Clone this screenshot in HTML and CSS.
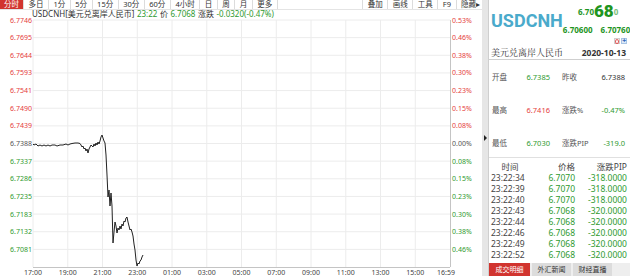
FILE: index.html
```html
<!DOCTYPE html>
<html lang="zh-CN">
<head>
  <meta charset="UTF-8">
  <title>USDCNH 分时</title>
  <link rel="stylesheet" href="styles.css">
</head>
<body>
<div class="app">

  <!-- 左侧：分时图 -->
  <div class="main">
    <div class="toolbar">
      <ul class="tabs">
        <li class="on">分时</li><li>多日</li><li>1分</li><li>5分</li><li>15分</li><li>30分</li><li>60分</li><li>4小时</li><li>日</li><li>周</li><li>月</li><li>更多</li>
      </ul>
      <ul class="tools">
        <li>叠加</li><li>画线</li><li>工具</li><li>F9</li><li>隐藏▸</li>
      </ul>
    </div>
    <div class="quote">
      <span>USDCNH[美元兑离岸人民币]</span><span class="dn">23:22</span><span>价</span><span class="dn">6.7068</span><span>涨跌</span><span class="dn">-0.0320(-0.47%)</span>
    </div>
    <svg class="chart" width="482" height="258" viewBox="0 18 482 258">
      <g class="grid">
        <line x1="33" y1="20" x2="450" y2="20"/>
        <line x1="33" y1="37.64" x2="450" y2="37.64"/>
        <line x1="33" y1="55.29" x2="450" y2="55.29"/>
        <line x1="33" y1="72.93" x2="450" y2="72.93"/>
        <line x1="33" y1="90.57" x2="450" y2="90.57"/>
        <line x1="33" y1="108.21" x2="450" y2="108.21"/>
        <line x1="33" y1="125.86" x2="450" y2="125.86"/>
        <line x1="33" y1="143.5" x2="450" y2="143.5"/>
        <line x1="33" y1="161.14" x2="450" y2="161.14"/>
        <line x1="33" y1="178.79" x2="450" y2="178.79"/>
        <line x1="33" y1="196.43" x2="450" y2="196.43"/>
        <line x1="33" y1="214.07" x2="450" y2="214.07"/>
        <line x1="33" y1="231.71" x2="450" y2="231.71"/>
        <line x1="33" y1="249.36" x2="450" y2="249.36"/>
        <line x1="33" y1="20" x2="33" y2="267"/>
        <line x1="67.75" y1="20" x2="67.75" y2="267"/>
        <line x1="102.5" y1="20" x2="102.5" y2="267"/>
        <line x1="137.25" y1="20" x2="137.25" y2="267"/>
        <line x1="172" y1="20" x2="172" y2="267"/>
        <line x1="206.75" y1="20" x2="206.75" y2="267"/>
        <line x1="241.5" y1="20" x2="241.5" y2="267"/>
        <line x1="276.25" y1="20" x2="276.25" y2="267"/>
        <line x1="311" y1="20" x2="311" y2="267"/>
        <line x1="345.75" y1="20" x2="345.75" y2="267"/>
        <line x1="380.5" y1="20" x2="380.5" y2="267"/>
        <line x1="415.25" y1="20" x2="415.25" y2="267"/>
      </g>
      <line class="axis" x1="450.5" y1="20" x2="450.5" y2="267"/>
      <line class="axis" x1="33" y1="267.5" x2="450" y2="267.5"/>

      <g class="ylab">
        <text x="32" y="22.5" class="up">6.7746</text>
        <text x="32" y="40.1" class="up">6.7695</text>
        <text x="32" y="57.8" class="up">6.7644</text>
        <text x="32" y="75.4" class="up">6.7593</text>
        <text x="32" y="93.1" class="up">6.7541</text>
        <text x="32" y="110.7" class="up">6.7490</text>
        <text x="32" y="128.4" class="up">6.7439</text>
        <text x="32" y="146">6.7388</text>
        <text x="32" y="163.6" class="dn">6.7337</text>
        <text x="32" y="181.3" class="dn">6.7286</text>
        <text x="32" y="198.9" class="dn">6.7235</text>
        <text x="32" y="216.6" class="dn">6.7183</text>
        <text x="32" y="234.2" class="dn">6.7132</text>
        <text x="32" y="251.9" class="dn">6.7081</text>
      </g>
      <g class="plab">
        <text x="452" y="22.5" class="up">0.53%</text>
        <text x="452" y="40.1" class="up">0.46%</text>
        <text x="452" y="57.8" class="up">0.38%</text>
        <text x="452" y="75.4" class="up">0.30%</text>
        <text x="452" y="93.1" class="up">0.23%</text>
        <text x="452" y="110.7" class="up">0.15%</text>
        <text x="452" y="128.4" class="up">0.08%</text>
        <text x="452" y="146">0.00%</text>
        <text x="452" y="163.6" class="dn">0.08%</text>
        <text x="452" y="181.3" class="dn">0.15%</text>
        <text x="452" y="198.9" class="dn">0.23%</text>
        <text x="452" y="216.6" class="dn">0.30%</text>
        <text x="452" y="234.2" class="dn">0.38%</text>
        <text x="452" y="251.9" class="dn">0.46%</text>
      </g>
      <g class="xlab">
        <text x="33" y="275">17:00</text>
        <text x="67.75" y="275">19:00</text>
        <text x="102.5" y="275">21:00</text>
        <text x="137.25" y="275">23:00</text>
        <text x="172" y="275">01:00</text>
        <text x="206.75" y="275">03:00</text>
        <text x="241.5" y="275">05:00</text>
        <text x="276.25" y="275">07:00</text>
        <text x="311" y="275">09:00</text>
        <text x="345.75" y="275">11:00</text>
        <text x="380.5" y="275">13:00</text>
        <text x="415.25" y="275">15:00</text>
        <text x="446" y="275">16:59</text>
      </g>

      <!-- 价格走势 -->
      <polyline class="price" points="33,144 34,145 36,144 38,146 40,145 42,146 44,145 46,146 48,145 50,146 52,145 55,145 57,146 60,145 63,145 66,144 68,145 70,144 72,143.5 75,143 78,143 80,143.5 81,145 82,147 83,146 84,149 85,148 86,151 87,149 88,153 89,149 90,147 91,145 92,146 93,147 94,144 95,146 96,143 97,145 98,142 99,144 100,141 101,137 102,135 103,138 104,141 105,143 106,155 107,175 108,197 109,190 110,206 111,193 112,206 113,243 114,232 115,222 116,226 117,233 118,228 119,230 120,226 121,229 122,224 123,226 124,221 125,222 126,218 127,217 128,222 129,226 130,230 131,229 132,232 133,236 134,244 135,250 136,260 137,266 138,263 139,264 140,261 141,260 142,257 143,255"/>
    </svg>
  </div>

  <div class="splitter"><span class="arrow"></span></div>

  <!-- 右侧：报价信息 -->
  <div class="side">
    <div class="ticker">
      <div class="head">
        <span class="sym">USDCNH</span>
        <div class="prices">
          <span class="last">6.70<b>68</b><i>0</i></span>
          <span class="bidask"><span>6.70600</span><span>6.70760</span></span>
          <span class="btns"><span class="btn-alert"></span><span class="btn-add">+</span></span>
        </div>
      </div>
      <div class="name">
        <span>美元兑离岸人民币</span>
        <span class="date">2020-10-13</span>
      </div>
    </div>

    <div class="stats">
      <div class="cell"><span>开盘</span><span class="dn">6.7385</span></div>
      <div class="cell"><span>昨收</span><span class="flat">6.7388</span></div>
      <div class="cell"><span>最高</span><span class="up">6.7416</span></div>
      <div class="cell"><span>涨跌%</span><span class="dn">-0.47%</span></div>
      <div class="cell"><span>最低</span><span class="dn">6.7030</span></div>
      <div class="cell"><span>涨跌PIP</span><span class="dn">-319.0</span></div>
    </div>

    <div class="ticks">
      <div class="th">时间</div><div class="th r">价格</div><div class="th r">涨跌PIP</div>
      <div>23:22:34</div><div class="r dn">6.7070</div><div class="r dn">-318.0000</div>
      <div>23:22:39</div><div class="r dn">6.7070</div><div class="r dn">-318.0000</div>
      <div>23:22:40</div><div class="r dn">6.7070</div><div class="r dn">-318.0000</div>
      <div>23:22:43</div><div class="r dn">6.7068</div><div class="r dn">-320.0000</div>
      <div>23:22:44</div><div class="r dn">6.7068</div><div class="r dn">-320.0000</div>
      <div>23:22:46</div><div class="r dn">6.7068</div><div class="r dn">-320.0000</div>
      <div>23:22:49</div><div class="r dn">6.7068</div><div class="r dn">-320.0000</div>
      <div>23:22:52</div><div class="r dn">6.7068</div><div class="r dn">-320.0000</div>
    </div>

    <ul class="side-tabs">
      <li class="on">成交明细</li><li>外汇新闻</li><li>财经直播</li>
    </ul>
  </div>

</div>
</body>
</html>
```

FILE: styles.css
```css
* { margin: 0; padding: 0; box-sizing: border-box; }
body { width: 630px; height: 276px; overflow: hidden; background: #fff; color: #333;
  font-family: "Noto Sans", "Noto Sans CJK SC", sans-serif; font-size: 7.5px; }
ul { list-style: none; }

.up { color: #e53d3d; fill: #e53d3d; }
.dn { color: #2f9a2f; fill: #2f9a2f; }
.flat { color: #333; }

.app { display: flex; height: 276px; }

/* 左侧图表 */
.main { width: 482px; display: flex; flex-direction: column; }
.toolbar { height: 10px; display: flex; justify-content: space-between; border-bottom: 1px solid #e4e4e4; font-size: 7.5px; }
.tabs, .tools { display: flex; }
.tabs li, .tools li { line-height: 9px; padding: 0 4.5px; border-right: 1px solid #dcdcdc; white-space: nowrap; }
.tabs li.on { background: #d1342f; color: #fff; padding: 0 4px; }
.tools li { padding: 0 4.5px; }
.tools li:first-child { border-left: 1px solid #dcdcdc; }
.tools li:last-child { border-right: 0; padding-right: 2px; }

.quote { height: 8px; line-height: 8px; padding-left: 32px; white-space: nowrap; display: flex; gap: 2.5px; font-size: 8px; }

.chart { display: block; overflow: visible; }
.grid line { stroke: #ececec; stroke-width: 1; }
.axis { stroke: #c4c4c4; stroke-width: 1; }
.chart text { font-family: "Noto Sans", sans-serif; font-size: 7px; fill: #555; }
.chart .up { fill: #e53d3d; }
.chart .dn { fill: #2f9a2f; }
.ylab text { text-anchor: end; }
.xlab text { text-anchor: middle; fill: #444; }
.price { fill: none; stroke: #222; stroke-width: 1; stroke-linejoin: round; }

/* 分隔条 */
.splitter { width: 6px; background: #e6e6e6; display: flex; align-items: center; justify-content: center; }
.arrow { width: 0; height: 0; border-left: 3px solid #222; border-top: 3px solid transparent; border-bottom: 3px solid transparent; }

/* 右侧报价 */
.side { width: 142px; display: flex; flex-direction: column; border-left: 1px solid #cfcfcf; }

.ticker { height: 60px; border-bottom: 1px solid #cfcfcf; padding: 0 4px 0 2px; display: flex; flex-direction: column; }
.head { height: 46px; display: flex; justify-content: space-between; }
.sym { font-family: Roboto, "Liberation Sans", sans-serif; font-weight: bold; font-size: 18px; color: #4aaacb; margin-top: 10px; }
.prices { display: flex; flex-direction: column; align-items: flex-end; }
.last { display: flex; align-items: flex-start; color: #1f951f; font-weight: bold; font-size: 8px; margin-right: 12px; padding-top: 6px; height: 20px; }
.last b { font-family: Roboto, sans-serif; font-size: 17px; line-height: 15px; margin-top: -2px; }
.last i { font-style: normal; color: #7cc07c; }
.bidask { display: flex; gap: 8px; color: #1f951f; font-weight: bold; font-size: 8px; margin-top: 5px; line-height: 9px; }
.btns { display: flex; gap: 1px; margin-top: 4px; margin-right: 3px; }
.btn-alert, .btn-add { width: 6px; height: 6px; border: 1px solid #cfcfcf; display: flex; align-items: center; justify-content: center; }
.btn-alert::before { content: ""; width: 3px; height: 3px; border: 1px solid #e05050; border-radius: 50%; }
.btn-add { background: #dce9f7; border-color: #a9c4e4; color: #2c62b8; font-size: 7px; font-weight: bold; line-height: 6px; }
.name { display: flex; justify-content: space-between; align-items: center; height: 12px; font-size: 9px; }
.name span:first-child { font-family: "Noto Serif CJK SC", "Noto Sans CJK SC", serif; color: #333; }
.date { font-weight: bold; font-size: 8.5px; color: #333; }

.stats { height: 98px; display: grid; grid-template-columns: 58px 63px; grid-auto-rows: 33px; column-gap: 12px; padding: 0 5px 0 3px; border-bottom: 1px solid #e0e0e0; }
.cell { display: flex; justify-content: space-between; align-items: center; }
.cell span:first-child { color: #555; font-size: 7.5px; }

.ticks { flex: 1; display: grid; grid-template-columns: 38px 46px 1fr; grid-auto-rows: 11px; align-content: start; padding: 3px 3px 0 2px; line-height: 11px; font-size: 8.5px; color: #444; }
.ticks .th { color: #444; }
.ticks .th:first-child { text-align: center; }
.ticks .r { text-align: right; }

.side-tabs { height: 13px; display: flex; gap: 2px; background: #eeeeee; font-size: 7px; }
.side-tabs li { width: 39px; line-height: 13px; text-align: center; background: #dcdcdc; color: #333; }
.side-tabs li.on { width: 41px; background: #d1342f; color: #fff; }
```
